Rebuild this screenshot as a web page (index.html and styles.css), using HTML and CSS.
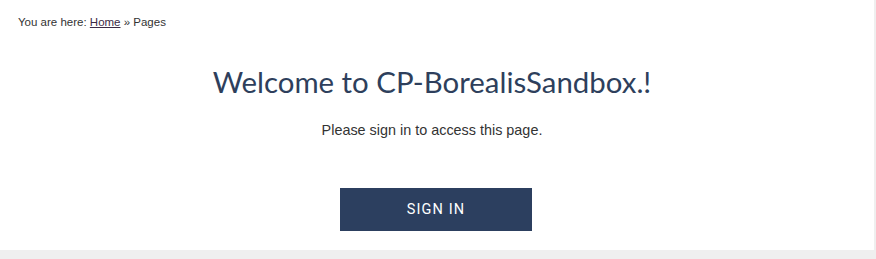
FILE: index.html
```html
<!DOCTYPE html>
<html lang="en">
<head>
<meta charset="utf-8">
<title>Pages</title>
<link rel="stylesheet" href="styles.css">
</head>
<body>
<div class="page">
  <main class="content">
    <div class="breadcrumb">You are here: <a href="#">Home</a> &raquo; Pages</div>
    <section class="welcome">
      <h1 class="title">Welcome to CP-BorealisSandbox.!</h1>
      <p class="lead">Please sign in to access this page.</p>
      <a class="btn" href="#">SIGN IN</a>
    </section>
  </main>
</div>
</body>
</html>
```
FILE: styles.css
```css
html, body {
  margin: 0;
  padding: 0;
  background: #efefef;
}
body {
  font-family: "Liberation Sans", Arial, sans-serif;
  color: #333;
}
.page {
  padding-right: 2px;
}
.content {
  background: #fff;
  height: 250px;
  box-sizing: border-box;
  padding: 15px 18px 0;
}
.breadcrumb {
  font-size: 11.5px;
  line-height: 14px;
  color: #333;
}
.breadcrumb a {
  color: #3b2a45;
  text-decoration: underline;
}
.welcome {
  display: flex;
  flex-direction: column;
  align-items: center;
  padding-right: 10px;
}
.title {
  margin: 36px 0 0;
  font-family: "Lato", sans-serif;
  font-weight: 400;
  font-size: 29.4px;
  line-height: 34px;
  color: #2e3f5c;
}
.lead {
  margin: 22px 0 0;
  font-size: 14.4px;
  line-height: 18px;
  color: #333;
}
.btn {
  margin: 49px 0 0 8px;
  display: flex;
  align-items: center;
  justify-content: center;
  width: 192px;
  height: 43px;
  background: #2c3f5f;
  color: #fff;
  text-decoration: none;
  font-family: "Roboto", sans-serif;
  font-weight: 400;
  font-size: 14.5px;
  letter-spacing: 1.1px;
}
```
